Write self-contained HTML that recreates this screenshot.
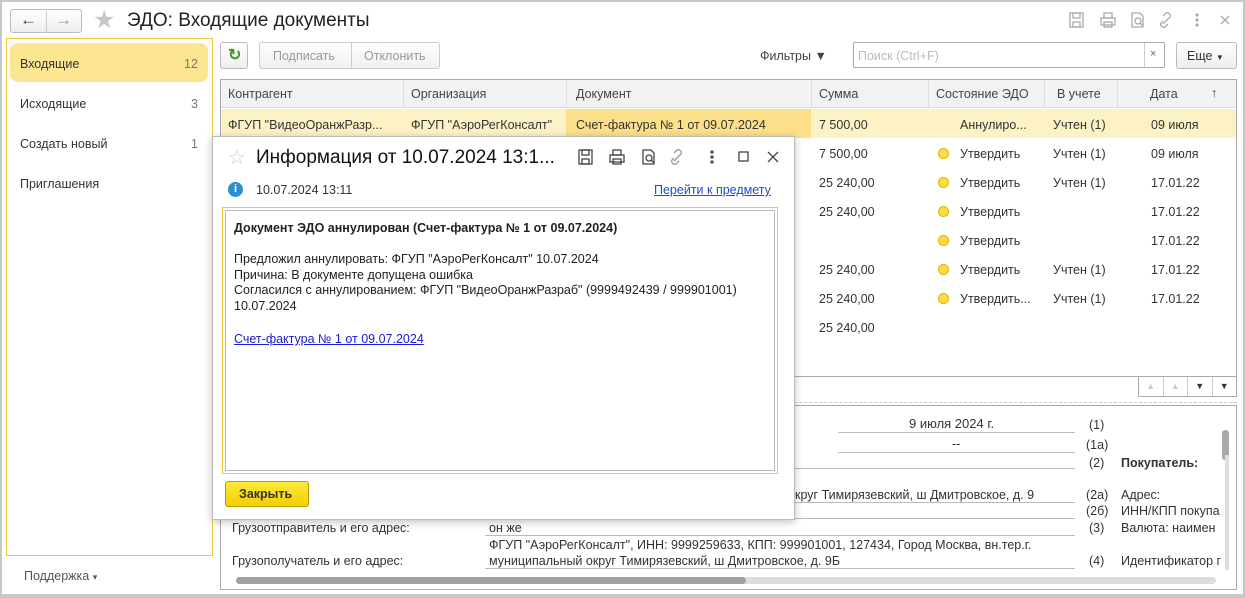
<!DOCTYPE html>
<html><head><meta charset="utf-8"><style>
*{box-sizing:border-box;margin:0;padding:0}
body{width:1245px;height:598px;overflow:hidden;background:#fff;font-family:"Liberation Sans",sans-serif;font-size:12.5px;color:#333;position:relative}
.a{position:absolute}
.frame{left:0;top:0;width:1245px;height:598px;border:2px solid #c8c8c8;border-bottom-width:4px}
.t{position:absolute;white-space:nowrap}
.hdr{background:#f2f2f2;border-bottom:1px solid #ddd}
.dot{position:absolute;width:11px;height:11px;border-radius:50%;background:#fbdc4a;border:1px solid #e0b400}
.ln{position:absolute;height:1px;background:#bbb}
</style></head><body>
<div class="a frame"></div>
<div class="a" style="left:10px;top:9px;width:72px;height:24px;border:1px solid #bbb;border-radius:3px;background:linear-gradient(#fff,#eee)"></div>
<div class="a" style="left:46px;top:9px;width:1px;height:24px;background:#ccc"></div>
<div class="t" style="left:20px;top:10px;font-size:17px;color:#444">&#8592;</div>
<div class="t" style="left:55px;top:10px;font-size:17px;color:#999">&#8594;</div>
<div class="t" style="left:93px;top:5px;font-size:25px;color:#c8c8c8">&#9733;</div>
<div class="t" style="left:127px;top:10px;font-size:19px;color:#222">ЭДО: Входящие документы</div>
<svg class="a" style="left:1068px;top:11px" width="170" height="18" fill="none" stroke="#aaa" stroke-width="1.3">
<rect x="2" y="2" width="13" height="14"/><rect x="5" y="2" width="7" height="5"/><rect x="5" y="11" width="7" height="5"/>
<rect x="33" y="7" width="14" height="7"/><rect x="36" y="2" width="8" height="5"/><rect x="36" y="11" width="8" height="5"/>
<path d="M64 2h8l3 3v11h-11z"/><circle cx="70" cy="10" r="3"/><path d="M72 12l3 3"/>
<path d="M95 10l-2 2a3 3 0 0 0 4 4l3-3M100 8l2-2a3 3 0 0 0-4-4l-3 3M95 13l6-6"/>
<circle cx="129" cy="4" r="1" fill="#aaa"/><circle cx="129" cy="9" r="1" fill="#aaa"/><circle cx="129" cy="14" r="1" fill="#aaa"/>
<path d="M153 5l8 8M161 5l-8 8"/>
</svg>
<div class="a" style="left:6px;top:38px;width:207px;height:518px;border:1px solid #f3c93a"></div>
<div class="a" style="left:10px;top:43px;width:198px;height:39px;border-radius:8px;background:#fde691"></div>
<div class="t" style="left:20px;top:57px">Входящие</div><div class="t" style="left:184px;top:57px;color:#777">12</div>
<div class="t" style="left:20px;top:97px">Исходящие</div><div class="t" style="left:191px;top:97px;color:#777">3</div>
<div class="t" style="left:20px;top:137px">Создать новый</div><div class="t" style="left:191px;top:137px;color:#777">1</div>
<div class="t" style="left:20px;top:177px">Приглашения</div>
<div class="t" style="left:24px;top:569px;color:#555">Поддержка <span style="font-size:9px">&#9662;</span></div>
<div class="a" style="left:220px;top:42px;width:28px;height:27px;border:1px solid #bbb;border-radius:3px;background:linear-gradient(#fff,#eee)"></div>
<div class="t" style="left:228px;top:45px;color:#3a9a2a;font-weight:bold;font-size:16px">&#8635;</div>
<div class="a" style="left:259px;top:42px;width:181px;height:27px;border:1px solid #ccc;border-radius:3px;background:linear-gradient(#fff,#f0f0f0)"></div>
<div class="a" style="left:351px;top:43px;width:1px;height:25px;background:#ccc"></div>
<div class="t" style="left:273px;top:49px;color:#999">Подписать</div>
<div class="t" style="left:364px;top:49px;color:#999">Отклонить</div>
<div class="t" style="left:760px;top:49px;color:#444">Фильтры &#9660;</div>
<div class="a" style="left:853px;top:42px;width:312px;height:26px;border:1px solid #aaa;border-radius:2px"></div>
<div class="a" style="left:1144px;top:43px;width:1px;height:24px;background:#ccc"></div>
<div class="t" style="left:858px;top:49px;color:#bbb">Поиск (Ctrl+F)</div>
<div class="t" style="left:1150px;top:48px;color:#666;font-size:11px">×</div>
<div class="a" style="left:1176px;top:42px;width:61px;height:27px;border:1px solid #bbb;border-radius:3px;background:linear-gradient(#fff,#eee)"></div>
<div class="t" style="left:1187px;top:49px;color:#333">Еще <span style="font-size:8px">&#9660;</span></div>
<div class="a" style="left:220px;top:79px;width:1017px;height:298px;border:1px solid #aaa"></div>
<div class="a hdr" style="left:221px;top:80px;width:1015px;height:28px"></div>
<div class="a" style="left:403px;top:80px;width:1px;height:28px;background:#ddd"></div>
<div class="a" style="left:566px;top:80px;width:1px;height:28px;background:#ddd"></div>
<div class="a" style="left:811px;top:80px;width:1px;height:28px;background:#ddd"></div>
<div class="a" style="left:928px;top:80px;width:1px;height:28px;background:#ddd"></div>
<div class="a" style="left:1044px;top:80px;width:1px;height:28px;background:#ddd"></div>
<div class="a" style="left:1117px;top:80px;width:1px;height:28px;background:#ddd"></div>
<div class="t" style="left:228px;top:87px;color:#444">Контрагент</div>
<div class="t" style="left:411px;top:87px;color:#444">Организация</div>
<div class="t" style="left:576px;top:87px;color:#444">Документ</div>
<div class="t" style="left:819px;top:87px;color:#444">Сумма</div>
<div class="t" style="left:936px;top:87px;color:#444">Состояние ЭДО</div>
<div class="t" style="left:1057px;top:87px;color:#444">В учете</div>
<div class="t" style="left:1150px;top:87px;color:#444">Дата</div>
<div class="t" style="left:1211px;top:86px;color:#444">&#8593;</div>
<div class="a" style="left:221px;top:109px;width:1015px;height:29px;background:#fdf2c5"></div>
<div class="a" style="left:566px;top:109px;width:245px;height:29px;background:#fce08a"></div>
<div class="t" style="left:228px;top:118px">ФГУП "ВидеоОранжРазр...</div>
<div class="t" style="left:411px;top:118px">ФГУП "АэроРегКонсалт"</div>
<div class="t" style="left:576px;top:118px">Счет-фактура № 1 от 09.07.2024</div>
<div class="t" style="left:819px;top:118px">7 500,00</div>
<div class="t" style="left:960px;top:118px">Аннулиро...</div>
<div class="t" style="left:1053px;top:118px">Учтен (1)</div>
<div class="t" style="left:1151px;top:118px">09 июля</div>
<div class="t" style="left:819px;top:147px">7 500,00</div><div class="dot" style="left:938px;top:148px"></div><div class="t" style="left:960px;top:147px">Утвердить</div><div class="t" style="left:1053px;top:147px">Учтен (1)</div><div class="t" style="left:1151px;top:147px">09 июля</div>
<div class="t" style="left:819px;top:176px">25 240,00</div><div class="dot" style="left:938px;top:177px"></div><div class="t" style="left:960px;top:176px">Утвердить</div><div class="t" style="left:1053px;top:176px">Учтен (1)</div><div class="t" style="left:1151px;top:176px">17.01.22</div>
<div class="t" style="left:819px;top:205px">25 240,00</div><div class="dot" style="left:938px;top:206px"></div><div class="t" style="left:960px;top:205px">Утвердить</div><div class="t" style="left:1151px;top:205px">17.01.22</div>
<div class="dot" style="left:938px;top:235px"></div><div class="t" style="left:960px;top:234px">Утвердить</div><div class="t" style="left:1151px;top:234px">17.01.22</div>
<div class="t" style="left:819px;top:263px">25 240,00</div><div class="dot" style="left:938px;top:264px"></div><div class="t" style="left:960px;top:263px">Утвердить</div><div class="t" style="left:1053px;top:263px">Учтен (1)</div><div class="t" style="left:1151px;top:263px">17.01.22</div>
<div class="t" style="left:819px;top:292px">25 240,00</div><div class="dot" style="left:938px;top:293px"></div><div class="t" style="left:960px;top:292px">Утвердить...</div><div class="t" style="left:1053px;top:292px">Учтен (1)</div><div class="t" style="left:1151px;top:292px">17.01.22</div>
<div class="t" style="left:819px;top:321px">25 240,00</div>
<div class="a" style="left:1138px;top:376px;width:99px;height:21px;border:1px solid #aaa;display:flex">
<div style="flex:1;border-right:1px solid #ccc;color:#ccc;font-size:9px;text-align:center;line-height:19px">&#9650;</div>
<div style="flex:1;border-right:1px solid #ccc;color:#ccc;font-size:9px;text-align:center;line-height:19px">&#9650;</div>
<div style="flex:1;border-right:1px solid #ccc;color:#333;font-size:9px;text-align:center;line-height:19px">&#9660;</div>
<div style="flex:1;color:#333;font-size:9px;text-align:center;line-height:19px">&#9660;</div></div>
<div class="a" style="left:220px;top:402px;width:1017px;border-top:1px dashed #ccc"></div>
<div class="a" style="left:220px;top:405px;width:1017px;height:185px;border:1px solid #aaa"></div>
<div class="t" style="left:909px;top:416px;font-size:13px">9 июля 2024 г.</div>
<div class="ln" style="left:838px;top:432px;width:237px"></div><div class="t" style="left:1089px;top:418px">(1)</div>
<div class="t" style="left:952px;top:437px">--</div>
<div class="ln" style="left:838px;top:452px;width:237px"></div><div class="t" style="left:1086px;top:438px">(1а)</div>
<div class="ln" style="left:795px;top:468px;width:280px"></div><div class="t" style="left:1089px;top:456px">(2)</div>
<div class="t" style="left:1121px;top:456px;font-weight:bold">Покупатель:</div>
<div class="t" style="left:795px;top:488px">круг Тимирязевский, ш Дмитровское, д. 9</div>
<div class="ln" style="left:795px;top:502px;width:280px"></div><div class="t" style="left:1086px;top:488px">(2а)</div><div class="t" style="left:1121px;top:488px">Адрес:</div>
<div class="ln" style="left:485px;top:518px;width:590px"></div><div class="t" style="left:1086px;top:504px">(2б)</div><div class="t" style="left:1121px;top:504px">ИНН/КПП покупа</div>
<div class="t" style="left:232px;top:521px">Грузоотправитель и его адрес:</div>
<div class="t" style="left:489px;top:521px">он же</div>
<div class="ln" style="left:485px;top:535px;width:590px"></div><div class="t" style="left:1089px;top:521px">(3)</div><div class="t" style="left:1121px;top:521px">Валюта: наимен</div>
<div class="t" style="left:489px;top:538px">ФГУП "АэроРегКонсалт", ИНН: 9999259633, КПП: 999901001, 127434, Город Москва, вн.тер.г.</div>
<div class="t" style="left:232px;top:554px">Грузополучатель и его адрес:</div>
<div class="t" style="left:489px;top:554px">муниципальный округ Тимирязевский, ш Дмитровское, д. 9Б</div>
<div class="ln" style="left:485px;top:568px;width:590px"></div><div class="t" style="left:1089px;top:554px">(4)</div><div class="t" style="left:1121px;top:554px">Идентификатор г</div>
<div class="a" style="left:1222px;top:430px;width:7px;height:30px;background:#aaa;border-radius:3px"></div>
<div class="a" style="left:1225px;top:455px;width:4px;height:115px;background:#ddd"></div>
<div class="a" style="left:236px;top:577px;width:980px;height:7px;background:#ddd;border-radius:4px"></div>
<div class="a" style="left:236px;top:577px;width:510px;height:7px;background:#a0a0a0;border-radius:4px"></div>
<div class="a" style="left:212px;top:136px;width:583px;height:384px;background:#fff;border:1px solid #bbb;box-shadow:0 2px 8px rgba(0,0,0,.25)"></div>
<div class="t" style="left:228px;top:145px;font-size:20px;color:#ccc">&#9734;</div>
<div class="t" style="left:256px;top:147px;font-size:19px;color:#111">Информация от 10.07.2024 13:1...</div>
<svg class="a" style="left:576px;top:148px" width="210" height="18" fill="none" stroke="#444" stroke-width="1.3">
<rect x="3" y="2" width="13" height="14"/><rect x="6" y="2" width="7" height="5"/><rect x="6" y="11" width="7" height="5"/>
<rect x="34" y="7" width="14" height="7"/><rect x="37" y="2" width="8" height="5"/><rect x="37" y="11" width="8" height="5"/>
<path d="M67 2h8l3 3v11h-11z"/><circle cx="73" cy="10" r="3"/><path d="M75 12l3 3"/>
<path d="M98 10l-2 2a3 3 0 0 0 4 4l3-3M103 8l2-2a3 3 0 0 0-4-4l-3 3M98 13l6-6" stroke="#999"/>
<circle cx="136" cy="4" r="1" fill="#666"/><circle cx="136" cy="9" r="1" fill="#666"/><circle cx="136" cy="14" r="1" fill="#666"/>
<rect x="163" y="4" width="9" height="9"/>
<path d="M192 4l10 10M202 4l-10 10"/>
</svg>
<div class="a" style="left:228px;top:182px;width:15px;height:15px;border-radius:50%;background:#2c8fd0;color:#fff;font-weight:bold;font-size:11px;text-align:center;line-height:15px">i</div>
<div class="t" style="left:256px;top:183px">10.07.2024 13:11</div>
<div class="t" style="left:654px;top:183px;color:#1a4fbf;text-decoration:underline">Перейти к предмету</div>
<div class="a" style="left:222px;top:207px;width:556px;height:267px;border:1px solid #f3c93a;padding:2px"><div style="width:100%;height:100%;border:1px solid #bbb"></div></div>
<div class="t" style="left:234px;top:221px;font-weight:bold;color:#222">Документ ЭДО аннулирован (Счет-фактура № 1 от 09.07.2024)</div>
<div class="t" style="left:234px;top:252px;color:#222;line-height:15.5px">Предложил аннулировать: ФГУП "АэроРегКонсалт" 10.07.2024<br>Причина: В документе допущена ошибка<br>Согласился с аннулированием: ФГУП "ВидеоОранжРазраб" (9999492439 / 999901001)<br>10.07.2024</div>
<div class="t" style="left:234px;top:332px;color:#1a1ae0;text-decoration:underline">Счет-фактура № 1 от 09.07.2024</div>
<div class="a" style="left:225px;top:481px;width:84px;height:26px;border:1px solid #b8a000;border-radius:3px;background:linear-gradient(#ffe93a,#f2cf00)"></div>
<div class="t" style="left:239px;top:487px;font-weight:bold;color:#333">Закрыть</div>
</body></html>
